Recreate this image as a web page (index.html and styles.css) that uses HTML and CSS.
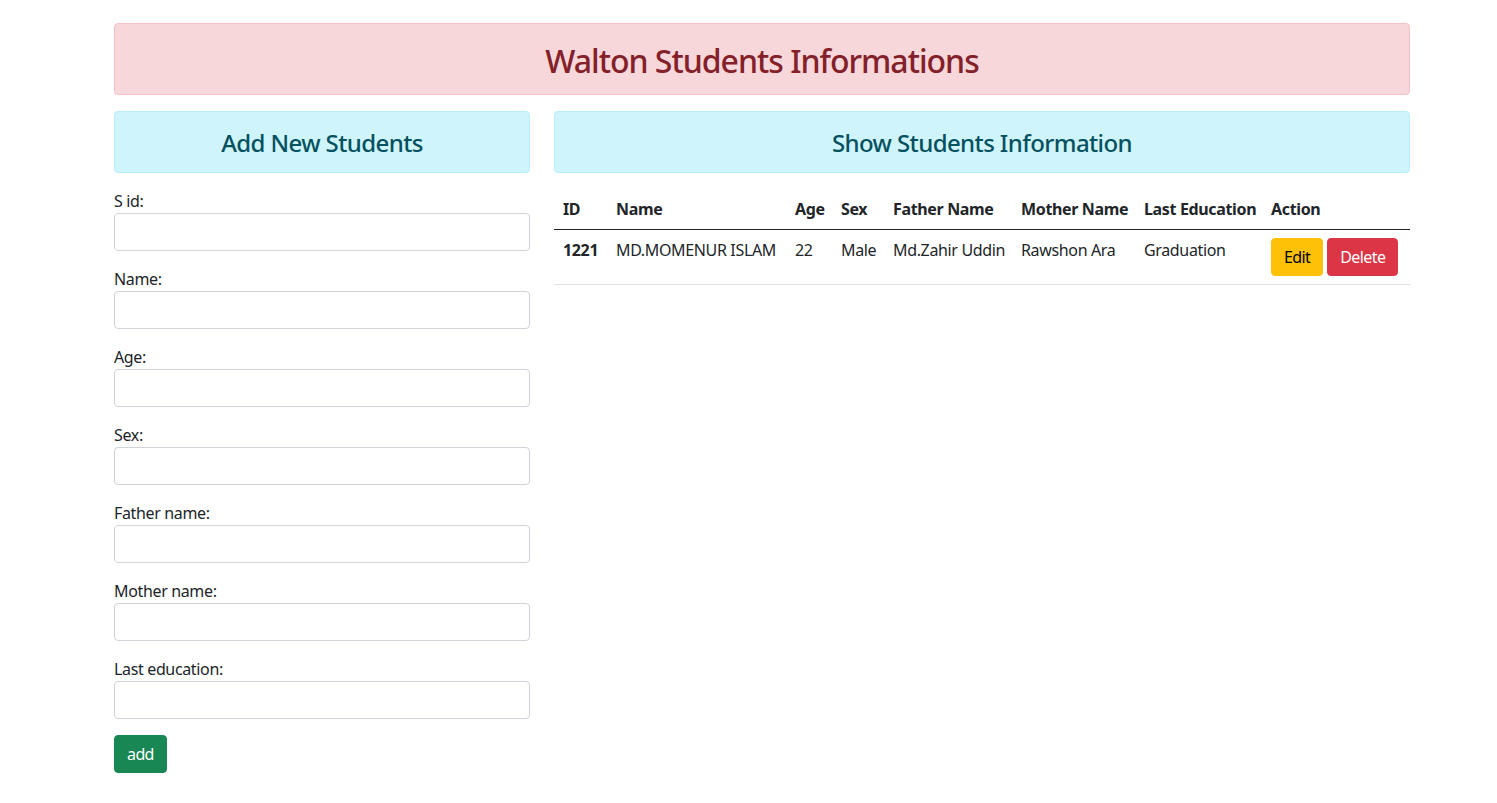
FILE: index.html
```html
<!DOCTYPE html>
<html lang="en">
<head>
<meta charset="utf-8">
<title>Walton Students Informations</title>
<link rel="stylesheet" href="styles.css">
</head>
<body>
<div class="container">
  <div class="alert alert-danger banner"><h2>Walton Students Informations</h2></div>
  <div class="row">
    <div class="col-left">
      <div class="alert alert-info sub"><h4>Add New Students</h4></div>
      <form class="form">
        <div class="field"><label>S id:</label><input type="text" class="form-control"></div>
        <div class="field"><label>Name:</label><input type="text" class="form-control"></div>
        <div class="field"><label>Age:</label><input type="text" class="form-control"></div>
        <div class="field"><label>Sex:</label><input type="text" class="form-control"></div>
        <div class="field"><label>Father name:</label><input type="text" class="form-control"></div>
        <div class="field"><label>Mother name:</label><input type="text" class="form-control"></div>
        <div class="field"><label>Last education:</label><input type="text" class="form-control"></div>
        <button type="button" class="btn btn-success">add</button>
      </form>
    </div>
    <div class="col-right">
      <div class="alert alert-info sub"><h4>Show Students Information</h4></div>
      <table class="table">
        <colgroup>
          <col class="c-id"><col class="c-name"><col class="c-age"><col class="c-sex">
          <col class="c-father"><col class="c-mother"><col class="c-edu"><col class="c-act">
        </colgroup>
        <thead>
          <tr><th>ID</th><th>Name</th><th>Age</th><th>Sex</th><th>Father Name</th><th>Mother Name</th><th>Last Education</th><th>Action</th></tr>
        </thead>
        <tbody>
          <tr>
            <th>1221</th><td>MD.MOMENUR ISLAM</td><td>22</td><td>Male</td><td>Md.Zahir Uddin</td><td>Rawshon Ara</td><td>Graduation</td>
            <td class="actions"><button type="button" class="btn btn-warning">Edit</button><button type="button" class="btn btn-danger">Delete</button></td>
          </tr>
        </tbody>
      </table>
    </div>
  </div>
</div>
</body>
</html>
```

FILE: styles.css
```css
* { box-sizing: border-box; }
body {
  margin: 0;
  font-family: "Segoe UI", "Noto Sans", "Open Sans", sans-serif;
  font-size: 16px;
  line-height: 1.5;
  letter-spacing: -0.35px;
  color: #212529;
  background: #fff;
}
.container {
  width: 1296px;
  margin-left: 114px;
  padding-top: 23px;
}
.alert {
  border: 1px solid transparent;
  border-radius: 4px;
  padding: 16px;
  text-align: center;
}
.alert-danger { background: #f8d7da; border-color: #f5c2c7; color: #842029; }
.alert-info { background: #cff4fc; border-color: #b6effb; color: #055160; }
.banner { margin-bottom: 16px; padding: 18px 16px 14px; }
h2, h4 { margin: 0; font-weight: 500; }
h2 { font-size: 32px; line-height: 38px; letter-spacing: -1px; }
h4 { font-size: 24px; line-height: 28px; letter-spacing: -0.6px; }
.sub { margin-bottom: 16px; padding: 17px 16px 15px; }
.row { display: flex; gap: 24px; }
.col-left { width: 416px; flex: none; }
.col-right { width: 856px; flex: none; }
.field { margin-bottom: 16px; }
.field label { display: block; line-height: 24px; }
.form-control {
  display: block;
  width: 100%;
  height: 38px;
  padding: 6px 12px;
  font: inherit;
  border: 1px solid #ced4da;
  border-radius: 4px;
  background: #fff;
}
.btn {
  display: inline-block;
  font: inherit;
  letter-spacing: -0.6px;
  line-height: 24px;
  padding: 6px 12px;
  border: 1px solid transparent;
  border-radius: 4px;
  cursor: pointer;
}
.btn-success { background: #198754; border-color: #198754; color: #fff; }
.btn-warning { background: #ffc107; border-color: #ffc107; color: #000; }
.btn-danger { background: #dc3545; border-color: #dc3545; color: #fff; margin-left: 4px; }
.table {
  width: 856px;
  border-collapse: collapse;
  table-layout: fixed;
  text-align: left;
}
.table th, .table td {
  padding: 8px 8px 8px 9px;
  line-height: 24px;
  white-space: nowrap;
  vertical-align: top;
}
.table thead th { border-bottom: 1px solid #212529; font-weight: 700; }
.table tbody th, .table tbody td { border-bottom: 1px solid #dee2e6; }
.table tbody th { font-weight: 700; }
.c-id { width: 53px; }
.c-name { width: 179px; }
.c-age { width: 46px; }
.c-sex { width: 52px; }
.c-father { width: 128px; }
.c-mother { width: 123px; }
.c-edu { width: 127px; }
.c-act { width: 148px; }
```
